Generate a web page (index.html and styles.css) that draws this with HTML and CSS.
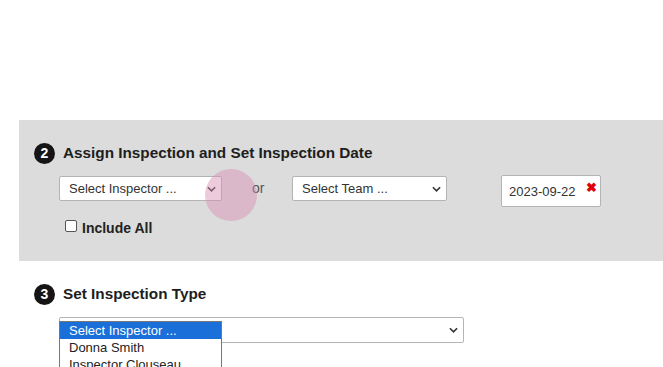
FILE: index.html
```html
<!DOCTYPE html>
<html lang="en">

<head>
    <meta charset="UTF-8">
    <title>Inspection</title>
    <link rel="stylesheet" href="styles.css">
</head>

<body>
    <section class="step step-gray">
        <h3 class="step-title"><span class="badge">2</span>Assign Inspection and Set Inspection Date</h3>

        <div class="assign-row">
            <div class="select select-inspector">
                <span>Select Inspector ...</span>
                <svg class="chevron" viewBox="0 0 10 6" width="9" height="6"><path d="M1 1l4 4 4-4" /></svg>
                <span class="click-dot"></span>
            </div>
            <span class="or">or</span>
            <div class="select select-team">
                <span>Select Team ...</span>
                <svg class="chevron" viewBox="0 0 10 6" width="9" height="6"><path d="M1 1l4 4 4-4" /></svg>
            </div>
            <div class="date-input">
                <span class="date-text">2023-09-22</span>
                <span class="clear">&#10006;</span>
            </div>
        </div>

        <label class="include-all"><span class="box"></span>Include All</label>
    </section>

    <section class="step">
        <h3 class="step-title"><span class="badge">3</span>Set Inspection Type</h3>

        <div class="type-wrap">
            <div class="select select-type">
                <span></span>
                <svg class="chevron" viewBox="0 0 10 6" width="9" height="6"><path d="M1 1l4 4 4-4" /></svg>
            </div>
            <ul class="dropdown">
                <li class="active">Select Inspector ...</li>
                <li>Donna Smith</li>
                <li>Inspector Clouseau</li>
            </ul>
        </div>
    </section>
</body>

</html>
```

FILE: styles.css
```css
html,
body {
    height: 100%;
}

body {
    margin: 0;
    padding-top: 120px;
    box-sizing: border-box;
    background-color: #fff;
    font-family: "Liberation Sans", Arial, sans-serif;
    color: #222;
    overflow: hidden;
}

.step {
    margin-left: 19px;
    padding: 22px 0 0 15px;
}

.step-gray {
    background-color: #dcdcdc;
    height: 141px;
    box-sizing: border-box;
}

.step-title {
    display: flex;
    align-items: center;
    margin: 0;
    font-size: 15.3px;
    font-weight: bold;
    color: #1e1e1e;
    height: 22px;
}

.badge {
    width: 21px;
    height: 21px;
    border-radius: 50%;
    background-color: #151515;
    color: #fff;
    font-size: 14px;
    display: flex;
    align-items: center;
    justify-content: center;
    margin-right: 8px;
}

.assign-row {
    display: flex;
    align-items: flex-start;
    margin: 12px 0 0 25px;
}

.select {
    position: relative;
    display: flex;
    align-items: center;
    justify-content: space-between;
    box-sizing: border-box;
    height: 25px;
    padding: 0 5px 0 9px;
    background-color: #fff;
    border: 1px solid #b4b4b4;
    border-radius: 2px;
    font-size: 13px;
    color: #333;
}

.chevron {
    fill: none;
    stroke: #333;
    stroke-width: 1.8;
}

.select-inspector {
    width: 163px;
}

.select-team {
    width: 155px;
}

.select-type {
    width: 405px;
    height: 26px;
}

.or {
    width: 70px;
    padding-left: 30px;
    box-sizing: border-box;
    font-size: 14px;
    line-height: 25px;
    color: #555;
}

.date-input {
    display: flex;
    align-items: flex-start;
    justify-content: space-between;
    box-sizing: border-box;
    width: 100px;
    height: 32px;
    margin: -1px 0 0 54px;
    padding: 4px 3px 0 7px;
    background-color: #fff;
    border: 1px solid #b4b4b4;
    border-radius: 2px;
    font-size: 13px;
    color: #333;
}

.date-text {
    padding-top: 4px;
}

.clear {
    color: #e0000a;
    font-size: 13px;
    font-weight: bold;
    line-height: 15px;
}

.click-dot {
    position: absolute;
    left: 145px;
    top: -8px;
    width: 52px;
    height: 52px;
    border-radius: 50%;
    background-color: rgba(214, 140, 178, 0.45);
}

.include-all {
    display: flex;
    align-items: center;
    margin: 13px 0 0 31px;
    font-size: 14px;
    font-weight: bold;
    color: #222;
}

.box {
    width: 10px;
    height: 10px;
    border: 1px solid #555;
    border-radius: 2px;
    background-color: #fff;
    margin-right: 5px;
    margin-top: -4px;
}

.type-wrap {
    position: relative;
    margin: 12px 0 0 25px;
}

.dropdown {
    position: absolute;
    top: 4px;
    left: 0;
    width: 163px;
    margin: 0;
    padding: 0;
    list-style: none;
    background-color: #fff;
    border: 1px solid #777;
    box-sizing: border-box;
    font-size: 13px;
    color: #222;
}

.dropdown li {
    height: 17px;
    line-height: 17px;
    padding-left: 9px;
}

.dropdown .active {
    background-color: #1a6fd9;
    color: #fff;
}
```
